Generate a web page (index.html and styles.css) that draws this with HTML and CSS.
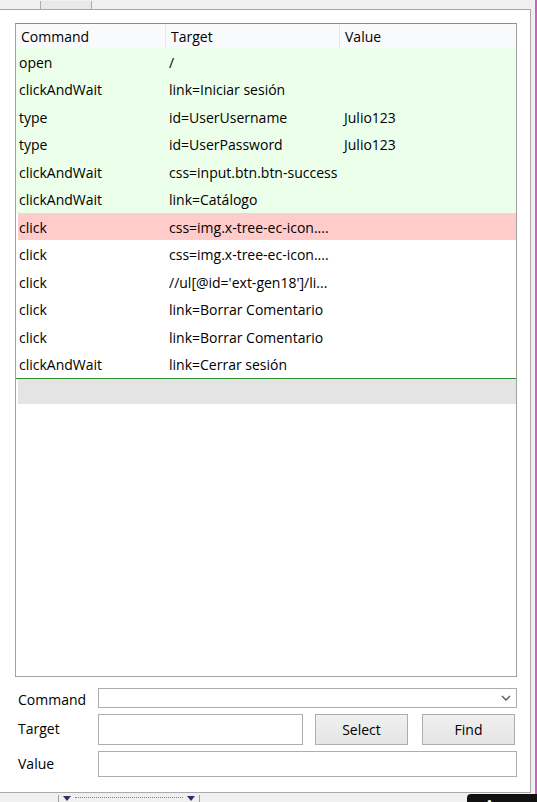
FILE: index.html
```html
<!DOCTYPE html>
<html>
<head>
<meta charset="utf-8">
<link rel="stylesheet" href="styles.css">
</head>
<body>
<div class="frame">
  <div class="main">
    <div class="tabstrip">
      <div class="tab"><span>Source</span></div>
    </div>
    <div class="panel">
      <div class="grid">
        <div class="head">
          <div class="hc">Command</div>
          <div class="hc">Target</div>
          <div class="hc">Value</div>
        </div>
        <div class="row ok"><div>open</div><div>/</div><div></div></div>
        <div class="row ok"><div>clickAndWait</div><div>link=Iniciar sesión</div><div></div></div>
        <div class="row ok"><div>type</div><div>id=UserUsername</div><div>Julio123</div></div>
        <div class="row ok"><div>type</div><div>id=UserPassword</div><div>Julio123</div></div>
        <div class="row ok"><div>clickAndWait</div><div>css=input.btn.btn-success</div><div></div></div>
        <div class="row ok"><div>clickAndWait</div><div>link=Catálogo</div><div></div></div>
        <div class="row fail"><div>click</div><div>css=img.x-tree-ec-icon....</div><div></div></div>
        <div class="row"><div>click</div><div>css=img.x-tree-ec-icon....</div><div></div></div>
        <div class="row"><div>click</div><div>//ul[@id='ext-gen18']/li...</div><div></div></div>
        <div class="row"><div>click</div><div>link=Borrar Comentario</div><div></div></div>
        <div class="row"><div>click</div><div>link=Borrar Comentario</div><div></div></div>
        <div class="row"><div>clickAndWait</div><div>link=Cerrar sesión</div><div></div></div>
        <div class="endline"></div>
        <div class="graybar"></div>
        <div class="empty"></div>
      </div>
      <div class="form">
        <div class="label lcmd">Command</div>
        <div class="select">
          <svg class="chev" width="10" height="6" viewBox="0 0 10 6"><polyline points="1,1 5,5 9,1" fill="none" stroke="#555" stroke-width="1.3"/></svg>
        </div>
        <div class="label">Target</div>
        <div class="targetrow">
          <div class="input tinput"></div>
          <div class="btn sel">Select</div>
          <div class="btn find">Find</div>
        </div>
        <div class="label lval">Value</div>
        <div class="input vinput"></div>
      </div>
    </div>
    <div class="bottom">
      <div class="splitter">
        <span class="bar"></span>
        <svg class="tri" width="8" height="5" viewBox="0 0 8 5"><polygon points="0,0 8,0 4,5" fill="#2e3366"/></svg>
        <span class="dots"></span>
        <svg class="tri" width="8" height="5" viewBox="0 0 8 5"><polygon points="0,0 8,0 4,5" fill="#2e3366"/></svg>
        <span class="bar"></span>
      </div>
    </div>
  </div>
  <div class="gutter"></div>
  <div class="blackbox"><span>&#9679;</span></div>
</div>
</body>
</html>
```

FILE: styles.css
```css
html, body {
  margin: 0;
  padding: 0;
}
body {
  background: #f0f0f0;
  font-family: "Open Sans", "Noto Sans", sans-serif;
  font-size: 14px;
  color: #000;
  width: 537px;
  height: 802px;
  overflow: hidden;
}
.frame {
  position: relative;
  display: flex;
  height: 802px;
}
.main {
  width: 531px;
  display: flex;
  flex-direction: column;
}
.gutter {
  width: 4px;
  border-right: 2px solid #d060c0;
  background: #f0f0f0;
}
.tabstrip {
  height: 9px;
  padding-left: 40px;
  display: flex;
  align-items: flex-end;
}
.tab {
  width: 52px;
  height: 8px;
  box-sizing: border-box;
  border: 1px solid #acacac;
  border-top: none;
  border-bottom: none;
  background: #e9e9e9;
  overflow: hidden;
  position: relative;
}
.tab span {
  position: absolute;
  left: 5px;
  top: -14px;
  font-size: 14px;
  line-height: 18px;
}
.panel {
  background: #fff;
  border-top: 1px solid #a8a8a8;
  border-right: 1px solid #a8a8a8;
  border-bottom: 1px solid #a8a8a8;
  padding-top: 13px;
  box-sizing: border-box;
  height: 785px;
}
.grid {
  margin-left: 15px;
  width: 502px;
  height: 654px;
  box-sizing: border-box;
  border: 1px solid #a0a0a0;
  border-top-color: #8c8c8c;
  display: flex;
  flex-direction: column;
}
.head {
  height: 24px;
  display: grid;
  grid-template-columns: 150px 174px 1fr;
  background: #f9fafc;
  flex: none;
}
.hc {
  padding-left: 5px;
  line-height: 25px;
  border-right: 1px solid #e0e8f4;
}
.hc:last-child {
  border-right: none;
}
.row {
  height: 27.5px;
  line-height: 29px;
  display: grid;
  grid-template-columns: 150px 174px 1fr;
  flex: none;
  white-space: nowrap;
}
.row > div {
  padding-left: 3px;
  overflow: hidden;
}
.row > div:nth-child(3) {
  padding-left: 4px;
}
.row.ok {
  background: #ebffea;
}
.row.fail {
  background: #ffcccb;
  margin-left: 2px;
  grid-template-columns: 148px 174px 1fr;
}
.row.fail > div:first-child {
  padding-left: 1px;
}
.endline {
  height: 1px;
  background: #2f8a2f;
  flex: none;
}
.graybar {
  height: 25px;
  margin-left: 2px;
  background: #e4e4e4;
  flex: none;
}
.empty {
  flex: 1;
}
.form {
  margin-top: 11px;
  margin-left: 18px;
  display: grid;
  grid-template-columns: 80px 419px;
  grid-template-rows: 20px 31px 26px;
  row-gap: 6px;
  align-items: center;
}
.label {
  font-size: 14px;
  line-height: 18px;
}
.lcmd {
  line-height: 14px;
  padding-top: 5px;
}
.lval {
  padding-top: 1px;
}
.select {
  height: 20px;
  box-sizing: border-box;
  border: 1px solid #acacac;
  display: flex;
  align-items: center;
  justify-content: flex-end;
  padding-right: 5px;
}
.targetrow {
  display: flex;
  align-items: center;
}
.input {
  box-sizing: border-box;
  border: 1px solid #abadb3;
  background: #fff;
}
.tinput {
  width: 205px;
  height: 31px;
}
.vinput {
  height: 26px;
}
.btn {
  width: 93px;
  height: 31px;
  box-sizing: border-box;
  border: 1px solid #adadad;
  background: linear-gradient(#f0f0f0, #e5e5e5);
  display: flex;
  align-items: center;
  justify-content: center;
  font-size: 14px;
  padding-top: 1px;
}
.sel {
  margin-left: 12px;
}
.find {
  margin-left: 14px;
}
.bottom {
  flex: 1;
  background: #f0f0f0;
}
.splitter {
  margin-left: 58px;
  display: flex;
  align-items: center;
  height: 8px;
  gap: 4px;
  padding-top: 1px;
}
.bar {
  width: 1px;
  height: 7px;
  background: #a0a0a0;
}
.tri {
  display: block;
}
.dots {
  width: 108px;
  height: 1px;
  border-top: 1px dotted #7a80b0;
}
.blackbox {
  position: absolute;
  left: 467px;
  top: 794px;
  width: 70px;
  height: 8px;
  background: #111;
  border-top-left-radius: 4px;
  color: #fff;
  overflow: hidden;
}
.blackbox span {
  position: absolute;
  left: 20px;
  top: 3px;
  font-size: 8px;
  line-height: 8px;
}
```
